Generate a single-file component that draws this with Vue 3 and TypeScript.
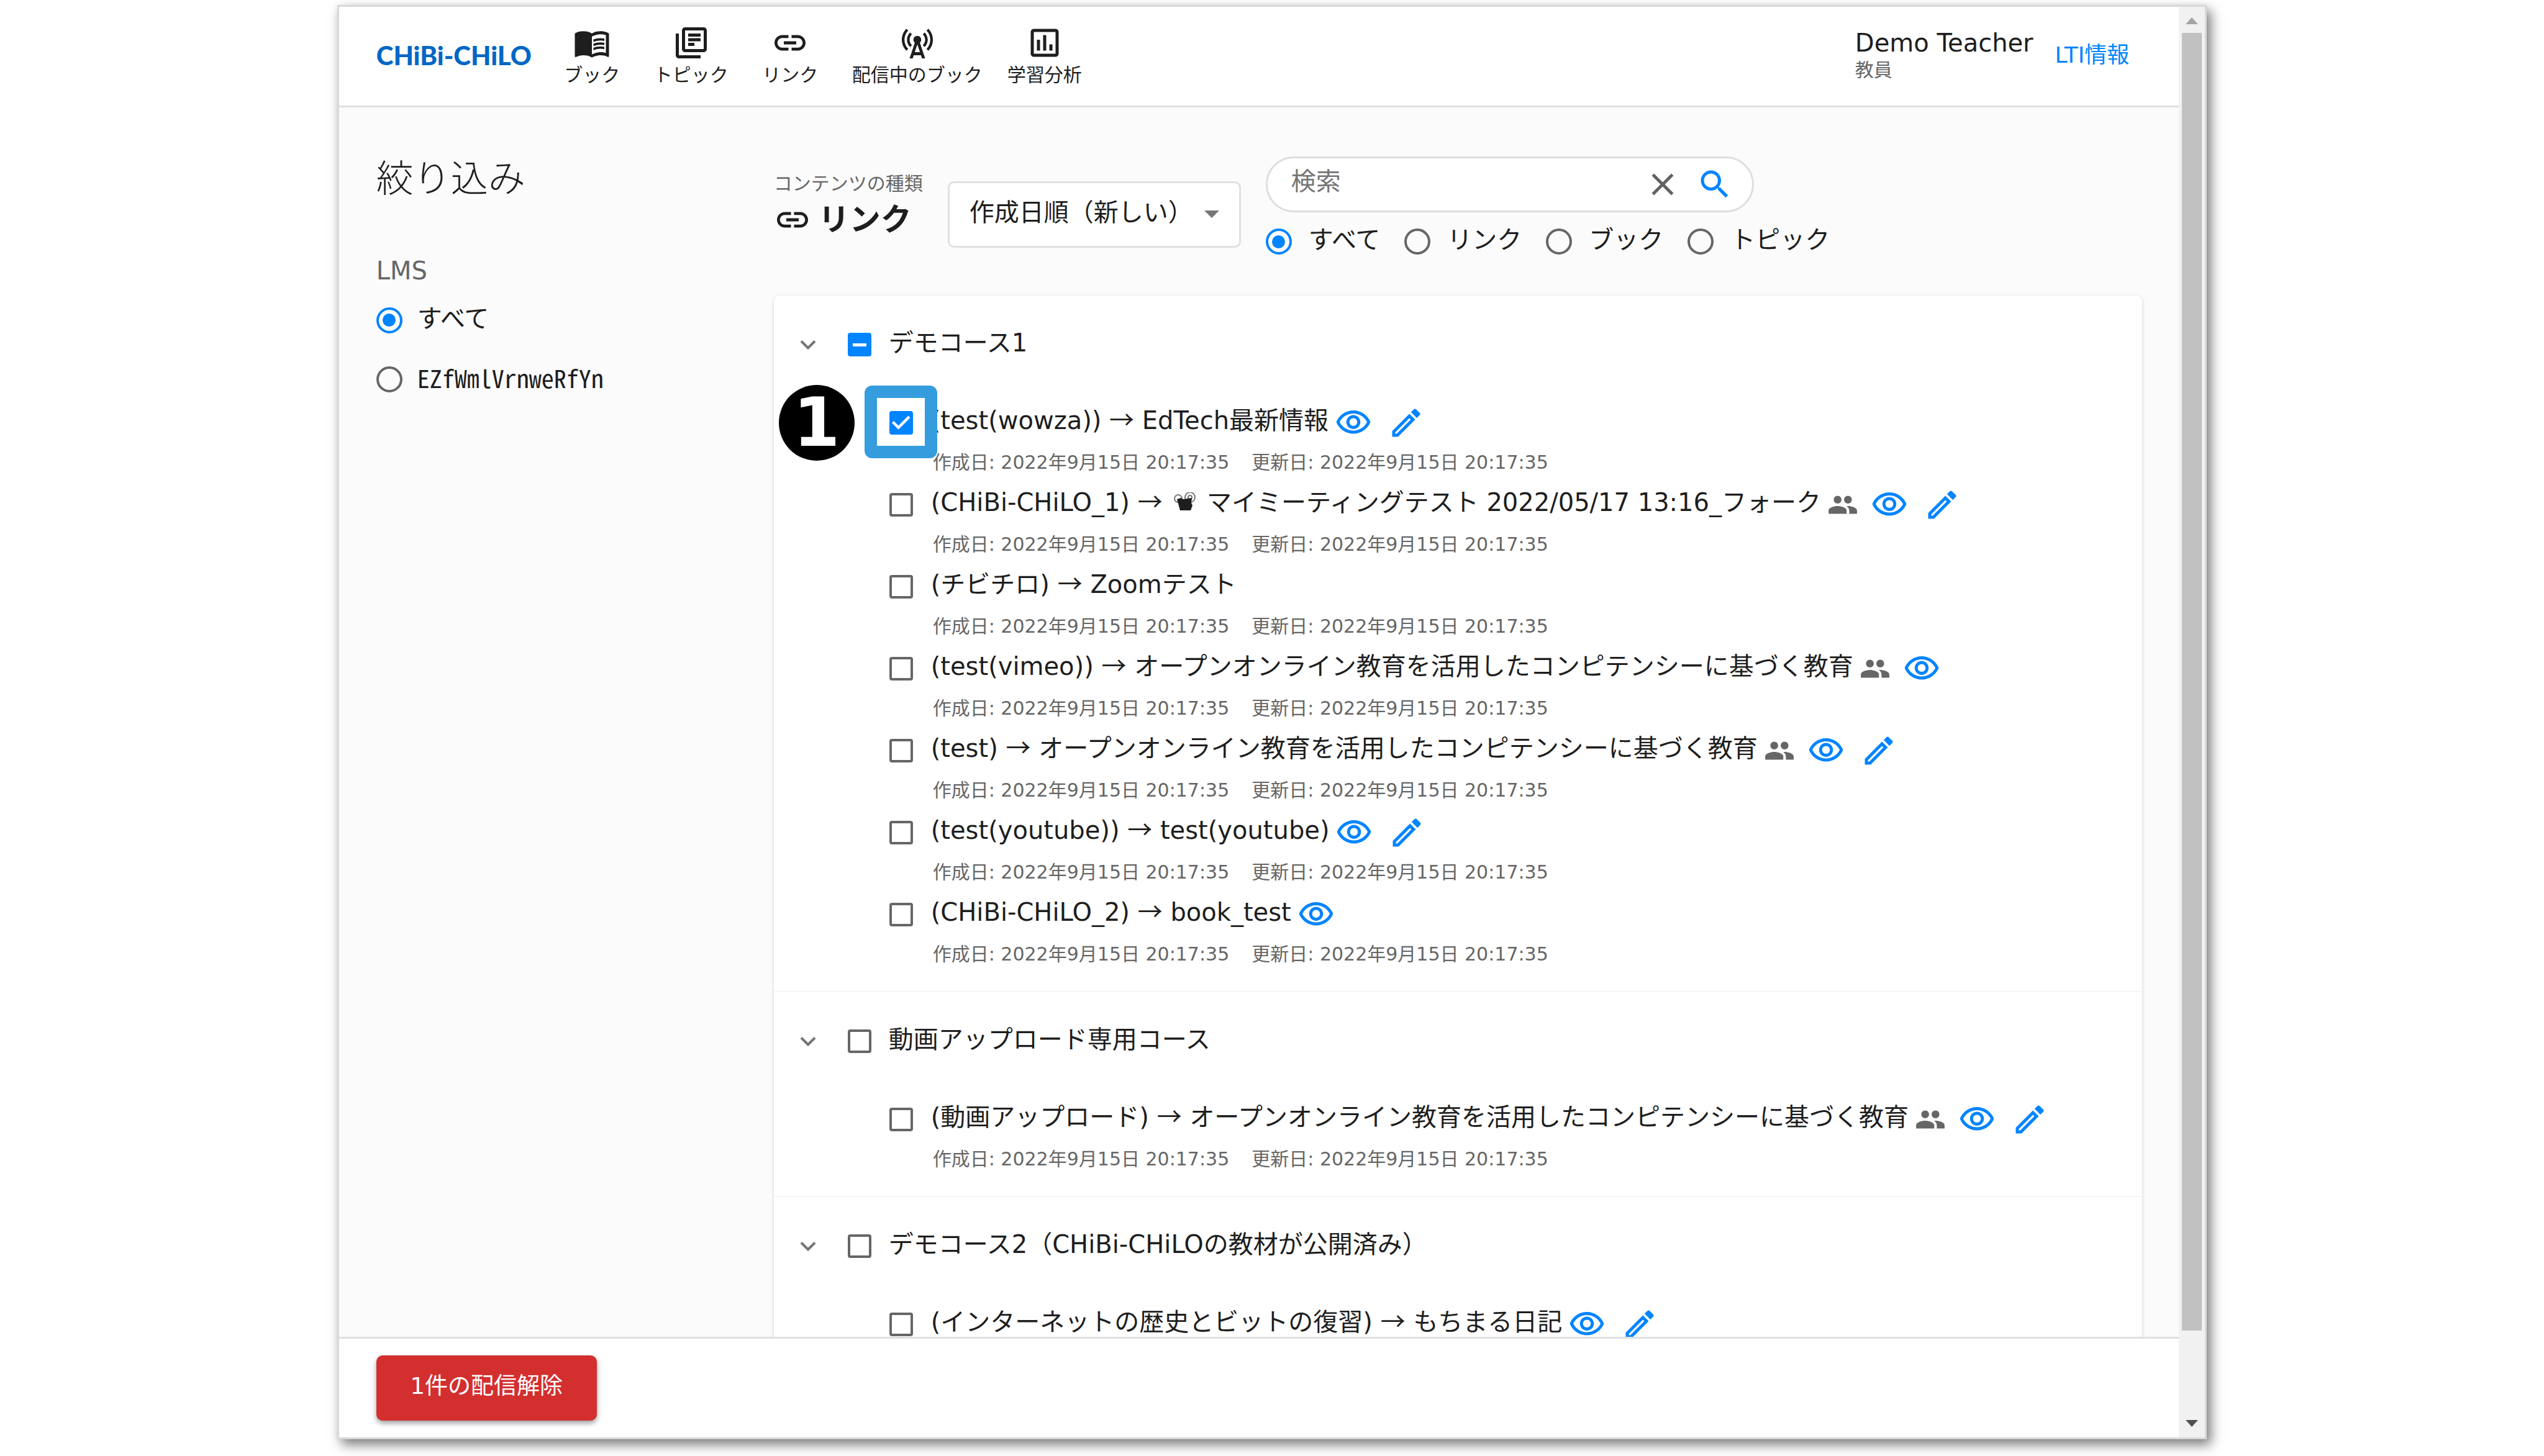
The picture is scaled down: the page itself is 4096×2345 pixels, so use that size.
<script setup lang="ts">
import { ref } from 'vue'

interface Item {
  id: string
  link: string
  content: string
  camera?: boolean
  checked?: boolean
  marked?: boolean
  shared?: boolean
  view?: boolean
  edit?: boolean
  undated?: boolean
}

interface Course {
  id: string
  name: string
  partial?: boolean
  items: Item[]
}

const icons = {
  book: 'M21 5c-1.11-.35-2.33-.5-3.5-.5-1.95 0-4.05.4-5.5 1.5-1.45-1.1-3.55-1.5-5.5-1.5S2.45 4.9 1 6v14.65c0 .25.25.5.5.5.1 0 .15-.05.25-.05C3.1 20.45 5.05 20 6.5 20c1.95 0 4.05.4 5.5 1.5 1.35-.85 3.8-1.5 5.5-1.5 1.65 0 3.35.3 4.75 1.05.1.05.15.05.25.05.25 0 .5-.25.5-.5V6c-.6-.45-1.25-.75-2-1zm0 13.5c-1.1-.35-2.3-.5-3.5-.5-1.7 0-4.15.65-5.5 1.5V8c1.35-.85 3.8-1.5 5.5-1.5 1.2 0 2.4.15 3.5.5v11.5zM17.5 10.5c.88 0 1.73.09 2.5.26V9.24c-.79-.15-1.64-.24-2.5-.24-1.7 0-3.24.29-4.5.83v1.66c1.13-.64 2.7-.99 4.5-.99zM13 12.49v1.66c1.13-.64 2.7-.99 4.5-.99.88 0 1.73.09 2.5.26V11.9c-.79-.15-1.64-.24-2.5-.24-1.7 0-3.24.3-4.5.83zM17.5 14.33c-1.7 0-3.24.29-4.5.83v1.66c1.13-.64 2.7-.99 4.5-.99.88 0 1.73.09 2.5.26v-1.52c-.79-.16-1.64-.24-2.5-.24z',
  topic: 'M4 6H2v14c0 1.1.9 2 2 2h14v-2H4V6zm16-4H8c-1.1 0-2 .9-2 2v12c0 1.1.9 2 2 2h12c1.1 0 2-.9 2-2V4c0-1.1-.9-2-2-2zm0 14H8V4h12v12zM10 9h8v2h-8zm0 3h4v2h-4zm0-6h8v2h-8z',
  link: 'M3.9 12c0-1.71 1.39-3.1 3.1-3.1h4V7H7c-2.76 0-5 2.24-5 5s2.24 5 5 5h4v-1.9H7c-1.71 0-3.1-1.39-3.1-3.1zM8 13h8v-2H8v2zm9-6h-4v1.9h4c1.71 0 3.1 1.39 3.1 3.1s-1.39 3.1-3.1 3.1h-4V17h4c2.76 0 5-2.24 5-5s-2.24-5-5-5z',
  tower: 'M7.3 14.7l1.2-1.2c-1-1-1.5-2.3-1.5-3.5s.5-2.6 1.5-3.5L7.3 5.3c-1.3 1.3-2 3-2 4.7s.7 3.4 2 4.7zM19.1 2.9l-1.2 1.2c1.6 1.6 2.4 3.8 2.4 5.9s-.8 4.3-2.4 5.9l1.2 1.2c2-2 2.9-4.5 2.9-7.1s-1-5.1-2.9-7.1zM6.1 4.1L4.9 2.9C3 4.9 2 7.4 2 10s1 5.1 2.9 7.1l1.2-1.2c-1.6-1.6-2.4-3.8-2.4-5.9s.8-4.3 2.4-5.9zM16.7 14.7c1.3-1.3 2-3 2-4.7-.1-1.7-.7-3.4-2-4.7l-1.2 1.2c1 1 1.5 2.3 1.5 3.5s-.5 2.6-1.5 3.5l1.2 1.2zM14.5 10c0-1.38-1.12-2.5-2.5-2.5S9.5 8.62 9.5 10c0 .76.34 1.42.87 1.88L7 22h2l.67-2h4.67l.66 2h2l-3.37-10.12c.53-.46.87-1.12.87-1.88zm-4.17 8L12 13l1.67 5h-3.34z',
  chart: 'M19 3H5c-1.1 0-2 .9-2 2v14c0 1.1.9 2 2 2h14c1.1 0 2-.9 2-2V5c0-1.1-.9-2-2-2zm0 16H5V5h14v14zM7 10h2v7H7zm4-3h2v10h-2zm4 6h2v4h-2z',
  close: 'M19 6.41L17.59 5 12 10.59 6.41 5 5 6.41 10.59 12 5 17.59 6.41 19 12 13.41 17.59 19 19 17.59 13.41 12z',
  search: 'M15.5 14h-.79l-.28-.27C15.41 12.59 16 11.11 16 9.5 16 5.91 13.09 3 9.5 3S3 5.91 3 9.5 5.91 16 9.5 16c1.61 0 3.09-.59 4.23-1.57l.27.28v.79l5 4.99L20.49 19l-4.99-5zm-6 0C7.01 14 5 11.99 5 9.5S7.01 5 9.5 5 14 7.01 14 9.5 11.99 14 9.5 14z',
  expand: 'M16.59 8.59L12 13.17 7.41 8.59 6 10l6 6 6-6z',
  eye: 'M12 6c3.79 0 7.17 2.13 8.82 5.5C19.17 14.87 15.79 17 12 17s-7.17-2.13-8.82-5.5C4.83 8.13 8.21 6 12 6m0-2C7 4 2.73 7.11 1 11.5 2.73 15.89 7 19 12 19s9.27-3.11 11-7.5C21.27 7.11 17 4 12 4zm0 5c1.38 0 2.5 1.12 2.5 2.5S13.38 14 12 14s-2.5-1.12-2.5-2.5S10.62 9 12 9m0-2c-2.48 0-4.5 2.02-4.5 4.5S9.52 16 12 16s4.5-2.02 4.5-4.5S14.48 7 12 7z',
  pencil: 'M14.06 9.02l.92.92L5.92 19H5v-.92l9.06-9.06M17.66 3c-.25 0-.51.1-.7.29l-1.83 1.83 3.75 3.75 1.83-1.83c.39-.39.39-1.02 0-1.41l-2.34-2.34c-.2-.2-.45-.29-.71-.29zm-3.6 3.19L3 17.25V21h3.75L17.81 9.94l-3.75-3.75z',
  people: 'M16 11c1.66 0 2.99-1.34 2.99-3S17.66 5 16 5c-1.66 0-3 1.34-3 3s1.34 3 3 3zm-8 0c1.66 0 2.99-1.34 2.99-3S9.66 5 8 5C6.34 5 5 6.34 5 8s1.34 3 3 3zm0 2c-2.33 0-7 1.17-7 3.5V19h14v-2.5c0-2.33-4.67-3.5-7-3.5zm8 0c-.29 0-.62.02-.97.05 1.16.84 1.97 1.97 1.97 3.45V19h6v-2.5c0-2.33-4.67-3.5-7-3.5z',
}

const nav = [
  { label: 'ブック', icon: icons.book },
  { label: 'トピック', icon: icons.topic },
  { label: 'リンク', icon: icons.link },
  { label: '配信中のブック', icon: icons.tower },
  { label: '学習分析', icon: icons.chart },
]

const searchTargets = ['すべて', 'リンク', 'ブック', 'トピック']
const searchTarget = ref('すべて')
const lms = ref('all')
const keyword = ref('')

const competency = 'オープンオンライン教育を活用したコンピテンシーに基づく教育'
const timestamp = '2022年9月15日 20:17:35'

const courses: Course[] = [
  {
    id: 'demo1',
    name: 'デモコース1',
    partial: true,
    items: [
      { id: 'a1', link: 'test(wowza)', content: 'EdTech最新情報', checked: true, marked: true, view: true, edit: true },
      { id: 'a2', link: 'CHiBi-CHiLO_1', content: 'マイミーティングテスト 2022/05/17 13:16_フォーク', camera: true, shared: true, view: true, edit: true },
      { id: 'a3', link: 'チビチロ', content: 'Zoomテスト' },
      { id: 'a4', link: 'test(vimeo)', content: competency, shared: true, view: true },
      { id: 'a5', link: 'test', content: competency, shared: true, view: true, edit: true },
      { id: 'a6', link: 'test(youtube)', content: 'test(youtube)', view: true, edit: true },
      { id: 'a7', link: 'CHiBi-CHiLO_2', content: 'book_test', view: true },
    ],
  },
  {
    id: 'upload',
    name: '動画アップロード専用コース',
    items: [{ id: 'b1', link: '動画アップロード', content: competency, shared: true, view: true, edit: true }],
  },
  {
    id: 'demo2',
    name: 'デモコース2（CHiBi-CHiLOの教材が公開済み）',
    items: [{ id: 'c1', link: 'インターネットの歴史とビットの復習', content: 'もちまる日記', view: true, edit: true, undated: true }],
  },
]
</script>

<template>
  <div class="page">
    <div class="window">
      <div class="app">
        <header class="header">
          <a class="logo" href="#">CHiBi-CHiLO</a>
          <nav class="nav">
            <button v-for="n in nav" :key="n.label" type="button" class="nav-item">
              <svg class="icon" viewBox="0 0 24 24" aria-hidden="true"><path :d="n.icon" /></svg>
              <span>{{ n.label }}</span>
            </button>
          </nav>
          <div class="user">
            <span class="user-name">Demo Teacher</span>
            <span class="user-role">教員</span>
          </div>
          <a class="lti" href="#">LTI情報</a>
        </header>

        <div class="body">
          <aside class="sidebar">
            <h2>絞り込み</h2>
            <fieldset>
              <legend>LMS</legend>
              <label class="lms-row">
                <input v-model="lms" type="radio" name="lms" value="all" /><span>すべて</span>
              </label>
              <label class="lms-row">
                <input v-model="lms" type="radio" name="lms" value="client" /><span class="client">EZfWmlVrnweRfYn</span>
              </label>
            </fieldset>
          </aside>

          <main class="main">
            <div class="toolbar">
              <div class="kind">
                <p>コンテンツの種類</p>
                <h1>
                  <svg viewBox="0 0 24 24" aria-hidden="true"><path :d="icons.link" /></svg>
                  <span>リンク</span>
                </h1>
              </div>
              <div class="sort">
                <select aria-label="並び順">
                  <option>作成日順（新しい）</option>
                </select>
                <svg viewBox="0 0 24 12" aria-hidden="true"><path d="M0 0h24L12 12z" /></svg>
              </div>
              <div class="search">
                <form class="search-box" @submit.prevent>
                  <input v-model="keyword" type="text" placeholder="検索" aria-label="検索" />
                  <button type="button" class="clear" aria-label="クリア" @click="keyword = ''">
                    <svg class="icon" viewBox="0 0 24 24" aria-hidden="true"><path :d="icons.close" /></svg>
                  </button>
                  <button type="submit" class="go" aria-label="検索する">
                    <svg class="icon" viewBox="0 0 24 24" aria-hidden="true"><path :d="icons.search" /></svg>
                  </button>
                </form>
                <div class="targets">
                  <label v-for="t in searchTargets" :key="t">
                    <input v-model="searchTarget" type="radio" name="target" :value="t" /><span>{{ t }}</span>
                  </label>
                </div>
              </div>
            </div>

            <div class="card">
              <section v-for="c in courses" :key="c.id" class="course">
                <div class="course-head">
                  <button type="button" class="expand" aria-label="開閉">
                    <svg viewBox="0 0 24 24" aria-hidden="true"><path :d="icons.expand" /></svg>
                  </button>
                  <label>
                    <input type="checkbox" :indeterminate="c.partial" /><span>{{ c.name }}</span>
                  </label>
                </div>
                <ul>
                  <li v-for="i in c.items" :key="i.id">
                    <div class="title">
                      <label>
                        <input type="checkbox" :checked="i.checked" />
                        <span>({{ i.link }}) <span class="arrow">→</span> <svg v-if="i.camera" class="camera" viewBox="0 0 36 30" aria-hidden="true">
                          <circle cx="7" cy="10" r="6" />
                          <circle cx="26" cy="8" r="8" />
                          <circle cx="26" cy="8" r="3" />
                          <path d="M5 11l6-2 4 2 14-2-1 8 2 4-3 8H10L7 18z" />
                        </svg>{{ i.camera ? ' ' : '' }}{{ i.content }}</span>
                      </label>
                      <svg v-if="i.shared" class="people" viewBox="0 0 24 24" aria-hidden="true"><path :d="icons.people" /></svg>
                      <button v-if="i.view" type="button" aria-label="表示">
                        <svg class="icon" viewBox="0 0 24 24" aria-hidden="true"><path :d="icons.eye" /></svg>
                      </button>
                      <button v-if="i.edit" type="button" aria-label="編集">
                        <svg class="icon" viewBox="0 0 24 24" aria-hidden="true"><path :d="icons.pencil" /></svg>
                      </button>
                      <template v-if="i.marked">
                        <span class="marker">1</span>
                        <span class="highlight"></span>
                      </template>
                    </div>
                    <p v-if="!i.undated" class="dates">
                      <span>作成日: {{ timestamp }}</span>
                      <span>更新日: {{ timestamp }}</span>
                    </p>
                  </li>
                </ul>
              </section>
            </div>
          </main>
        </div>

        <footer class="footer">
          <button type="button">1件の配信解除</button>
        </footer>
      </div>

      <div class="scrollbar" aria-hidden="true">
        <svg class="up" viewBox="0 0 20 11"><path d="M10 0l10 11H0z" /></svg>
        <div class="thumb"></div>
        <svg class="down" viewBox="0 0 20 11"><path d="M0 0h20L10 11z" /></svg>
      </div>
    </div>
  </div>
</template>

<style>
body {
  background: #fff;
}
</style>

<style scoped>
.page,
.page * {
  box-sizing: border-box;
}
.page {
  height: 100vh;
  padding: 8px 0 27px;
  overflow: hidden;
  color: #1e1e1e;
  font-family: 'DejaVu Sans', 'Noto Sans CJK JP', sans-serif;
  font-size: 40px;
  font-weight: 400;
  line-height: 60px;
}
h1,
h2,
p,
ul,
fieldset,
legend {
  margin: 0;
  padding: 0;
  border: 0;
}
ul {
  list-style: none;
}
a {
  text-decoration: none;
}
button,
input,
select {
  margin: 0;
  padding: 0;
  border: 0;
  background: none;
  color: inherit;
  font: inherit;
}
svg {
  display: block;
  flex: none;
  fill: currentColor;
}
.icon {
  width: 60px;
  height: 60px;
}
.window {
  display: flex;
  width: 73.5%;
  height: 100%;
  margin: 0 auto;
  border: 3px solid #d9d9d9;
  background: #fff;
  box-shadow: 7px 9px 18px rgba(0, 0, 0, 0.5), 0 0 10px rgba(0, 0, 0, 0.06);
}
.app {
  display: flex;
  flex: 1;
  flex-direction: column;
  min-width: 0;
}

/* header */
.header {
  display: flex;
  flex: none;
  align-items: center;
  height: 162px;
  padding: 0 80px 0 60px;
  border-bottom: 3px solid #dfdfdf;
}
.logo {
  width: 268px;
  padding-bottom: 4px;
  color: #0067c5;
  font-family: Lato, sans-serif;
  font-size: 42px;
  font-weight: 900;
  white-space: nowrap;
}
.nav {
  display: flex;
  flex: 1;
}
.nav-item {
  display: flex;
  flex-direction: column;
  align-items: center;
  min-width: 159px;
  padding: 0 20px;
  font-size: 30px;
  line-height: 44px;
}
.user {
  display: flex;
  flex-direction: column;
  margin-right: 35px;
  padding-bottom: 8px;
}
.user-name {
  line-height: 52px;
}
.user-role {
  color: #666;
  font-size: 30px;
  line-height: 36px;
}
.lti {
  padding-bottom: 4px;
  color: #0084ff;
  font-size: 36px;
}

/* radios and checkboxes, whose labels sit a little above the box centre */
label > span {
  padding-bottom: 6px;
}
input[type='radio'] {
  display: grid;
  flex: none;
  place-items: center;
  width: 42px;
  height: 42px;
  border: 4px solid #666;
  border-radius: 50%;
  appearance: none;
}
input[type='radio']:checked {
  border-color: #0084ff;
}
input[type='radio']:checked::after {
  width: 21px;
  height: 21px;
  border-radius: 50%;
  background: #0084ff;
  content: '';
}
input[type='checkbox'] {
  display: grid;
  flex: none;
  place-items: center;
  width: 38px;
  height: 38px;
  border: 4px solid #666;
  border-radius: 4px;
  appearance: none;
}
input[type='checkbox']:checked,
input[type='checkbox']:indeterminate {
  border: 0;
  background: #0084ff;
}
input[type='checkbox']:checked::after {
  width: 38px;
  height: 38px;
  background: #fff;
  clip-path: polygon(39% 78%, 11% 50%, 19% 42%, 39% 62%, 81% 20%, 89% 28%);
  content: '';
}
input[type='checkbox']:indeterminate::after {
  width: 22px;
  height: 5px;
  background: #fff;
  content: '';
}

/* body */
.body {
  display: flex;
  flex: 1;
  min-height: 0;
  overflow: hidden;
  background: #fbfbfb;
}
.sidebar {
  flex: none;
  width: 700px;
  padding: 75px 0 0 60px;
}
.sidebar h2 {
  margin-bottom: 88px;
  font-size: 60px;
  font-weight: 300;
  line-height: 80px;
}
.sidebar legend {
  margin-bottom: 12px;
  color: #666;
  line-height: 40px;
}
.lms-row {
  display: flex;
  gap: 24px;
  align-items: center;
  height: 95px;
}
.client {
  font-family: 'Noto Sans Mono CJK JP', 'Liberation Mono', monospace;
}
.main {
  flex: 1;
  min-width: 0;
  padding: 79px 59px 0 0;
}
.toolbar {
  display: flex;
  gap: 40px;
  align-items: flex-start;
  margin-bottom: 54px;
}
.kind {
  width: 240px;
  margin-top: 26px;
}
.kind p {
  color: #666;
  font-size: 30px;
  line-height: 36px;
  white-space: nowrap;
}
.kind h1 {
  display: flex;
  gap: 12px;
  align-items: center;
  font-size: 50px;
  font-weight: 700;
  line-height: 80px;
}
.kind svg {
  width: 60px;
  height: 60px;
}
.sort {
  position: relative;
  width: 472px;
  margin-top: 40px;
}
.sort select {
  width: 100%;
  height: 107px;
  padding: 0 80px 8px 32px;
  border: 3px solid #e0e0e0;
  border-radius: 10px;
  background: #fff;
  appearance: none;
}
.sort svg {
  position: absolute;
  top: 47px;
  right: 35px;
  width: 24px;
  height: 12px;
  color: #757575;
  pointer-events: none;
}
.search {
  width: 980px;
}
.search-box {
  display: flex;
  align-items: center;
  width: 786px;
  height: 90px;
  padding: 0 30px 0 38px;
  border: 3px solid #dedede;
  border-radius: 45px;
  background: #fff;
}
.search-box input {
  flex: 1;
  min-width: 0;
  padding-bottom: 10px;
  outline: 0;
}
.search-box input::placeholder {
  color: #757575;
  opacity: 1;
}
.clear {
  margin-right: 24px;
  color: #616161;
}
.go {
  color: #0084ff;
}
.targets {
  display: flex;
  gap: 39px;
  margin-top: 14px;
}
.targets label {
  display: flex;
  gap: 27px;
  align-items: center;
  white-space: nowrap;
}

/* course tree */
.card {
  border-radius: 10px;
  background: #fff;
  box-shadow: 0 2px 6px rgba(0, 0, 0, 0.16);
}
.course {
  padding-bottom: 31px;
  border-bottom: 2px solid #f6f6f6;
}
.course-head {
  display: flex;
  gap: 39px;
  align-items: center;
  height: 158px;
  padding-left: 30px;
}
.course-head label {
  display: flex;
  gap: 28px;
  align-items: center;
}
.expand svg {
  width: 50px;
  height: 50px;
  color: #757575;
}
.course ul {
  padding-top: 7px;
}
.course li {
  height: 132px;
  padding-left: 186px;
}
.title {
  position: relative;
  display: flex;
  align-items: center;
  height: 80px;
  white-space: nowrap;
}
.title label {
  display: flex;
  gap: 29px;
  align-items: center;
  margin-right: 10px;
}
.title label > span {
  padding-bottom: 12px;
}
.title button {
  margin-right: 25px;
  color: #0084ff;
}
.arrow {
  font-family: 'Noto Sans CJK JP', sans-serif;
}
.people {
  width: 50px;
  height: 50px;
  margin-right: 20px;
  color: #666;
}
.camera {
  display: inline-block;
  width: 36px;
  height: 30px;
  margin: 0 4px 0 6px;
}
.camera circle {
  fill: none;
  stroke: #777;
  stroke-width: 2px;
}
.dates {
  display: flex;
  gap: 36px;
  padding-left: 70px;
  color: #666;
  font-size: 30px;
  line-height: 48px;
}
.marker {
  position: absolute;
  top: -21px;
  left: -178px;
  width: 122px;
  height: 122px;
  border-radius: 50%;
  background: #000;
  color: #fff;
  font-family: 'DejaVu Sans', sans-serif;
  font-size: 108px;
  font-weight: 700;
  line-height: 122px;
  text-align: center;
}
.highlight {
  position: absolute;
  top: -20px;
  left: -40px;
  width: 117px;
  height: 117px;
  border: 20px solid #359ddd;
  border-radius: 12px;
}

/* footer */
.footer {
  flex: none;
  padding: 27px 60px;
  border-top: 3px solid #dfdfdf;
  background: #fff;
}
.footer button {
  display: block;
  width: 355px;
  height: 105px;
  padding-bottom: 6px;
  border-radius: 10px;
  background: #d32f2f;
  box-shadow: 0 4px 8px rgba(0, 0, 0, 0.4);
  color: #fff;
  font-size: 37px;
}

/* scrollbar */
.scrollbar {
  display: flex;
  flex: none;
  flex-direction: column;
  align-items: center;
  width: 42px;
  padding: 17px 0;
  background: #f1f1f1;
}
.scrollbar svg {
  width: 20px;
  height: 11px;
}
.up {
  color: #a3a3a3;
}
.down {
  color: #505050;
}
.thumb {
  flex: 1;
  width: 32px;
  margin: 14px 0 144px;
  background: #c1c1c1;
}
</style>
